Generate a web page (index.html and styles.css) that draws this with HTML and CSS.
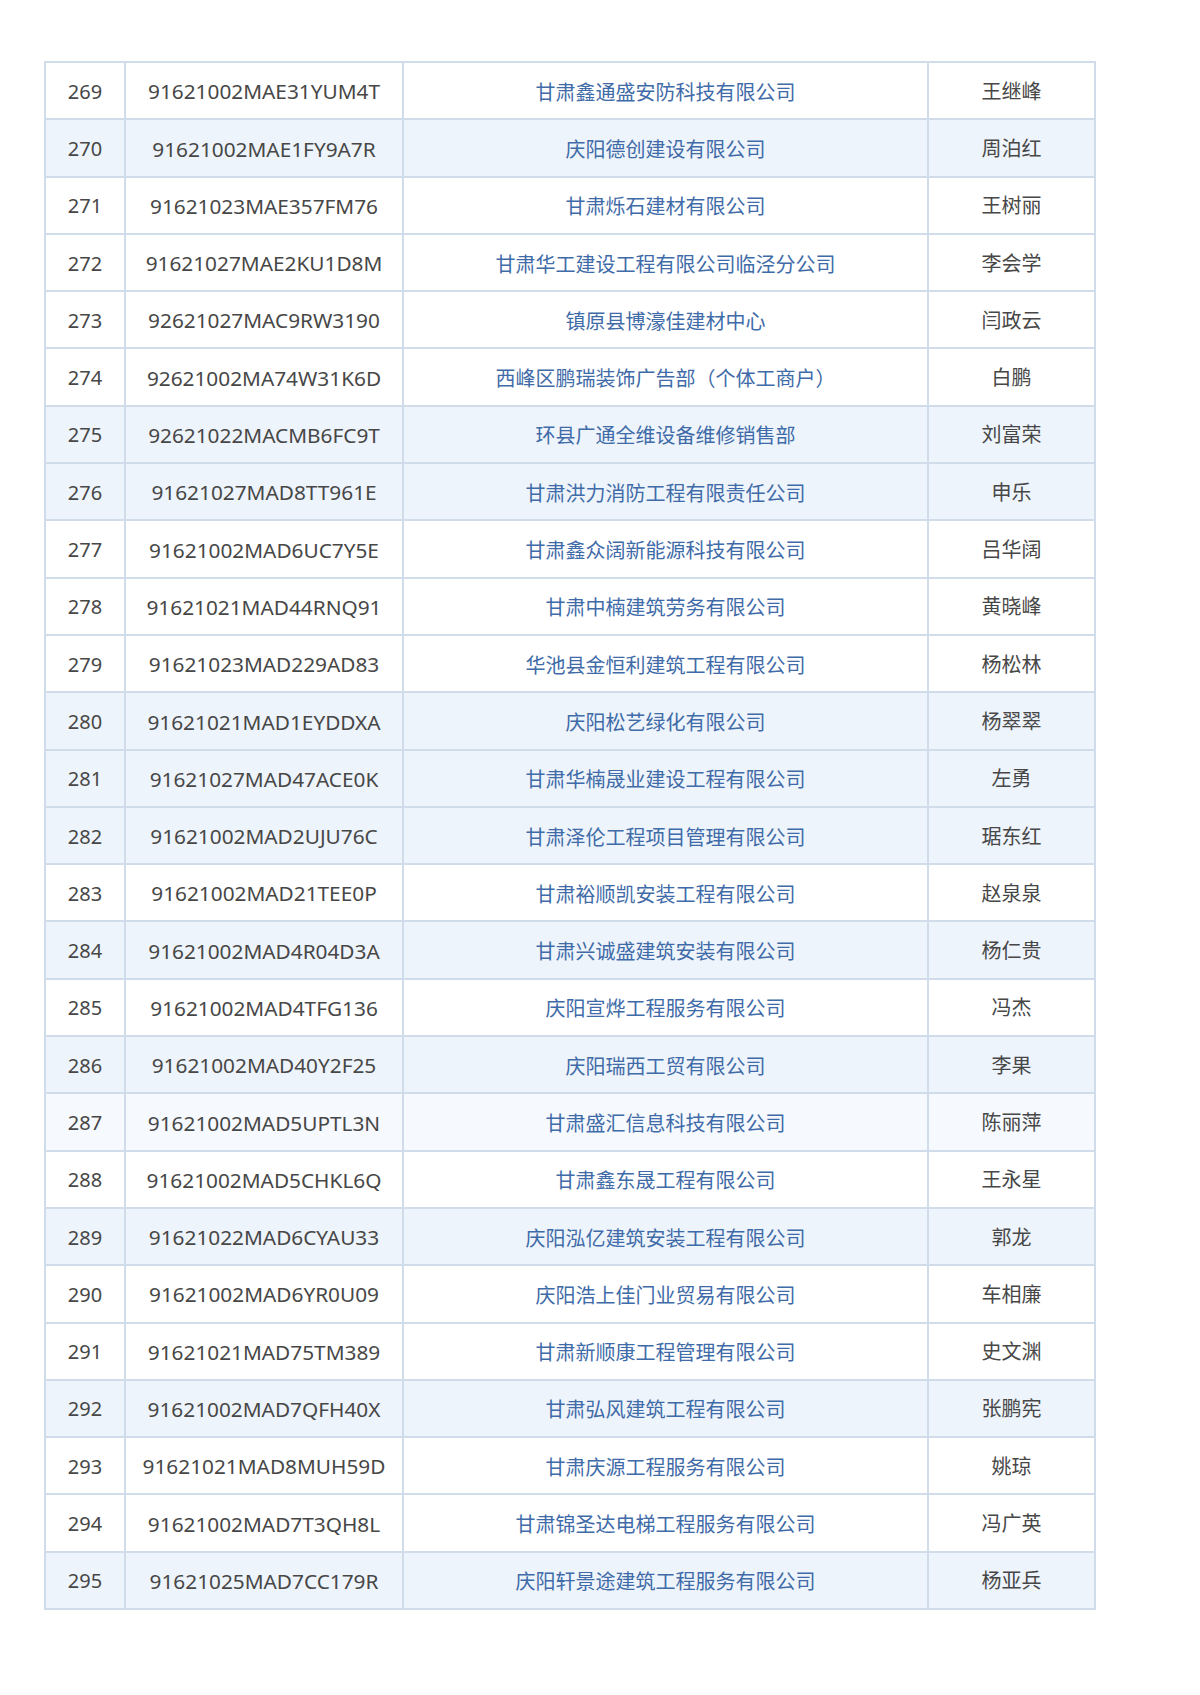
FILE: index.html
```html
<!DOCTYPE html>
<html lang="zh-CN">
<head>
<meta charset="utf-8">
<title>名单</title>
<link rel="stylesheet" href="styles.css">
</head>
<body>
<div class="page">
<table class="list">
<colgroup><col class="c-no"><col class="c-code"><col class="c-name"><col class="c-person"></colgroup>
<tbody>
<tr><td>269</td><td class="code">91621002MAE31YUM4T</td><td class="co">甘肃鑫通盛安防科技有限公司</td><td>王继峰</td></tr>
<tr class="tint"><td>270</td><td class="code">91621002MAE1FY9A7R</td><td class="co">庆阳德创建设有限公司</td><td>周泊红</td></tr>
<tr><td>271</td><td class="code">91621023MAE357FM76</td><td class="co">甘肃烁石建材有限公司</td><td>王树丽</td></tr>
<tr><td>272</td><td class="code">91621027MAE2KU1D8M</td><td class="co">甘肃华工建设工程有限公司临泾分公司</td><td>李会学</td></tr>
<tr><td>273</td><td class="code">92621027MAC9RW3190</td><td class="co">镇原县博濠佳建材中心</td><td>闫政云</td></tr>
<tr><td>274</td><td class="code">92621002MA74W31K6D</td><td class="co">西峰区鹏瑞装饰广告部（个体工商户）</td><td>白鹏</td></tr>
<tr class="tint"><td>275</td><td class="code">92621022MACMB6FC9T</td><td class="co">环县广通全维设备维修销售部</td><td>刘富荣</td></tr>
<tr class="tint"><td>276</td><td class="code">91621027MAD8TT961E</td><td class="co">甘肃洪力消防工程有限责任公司</td><td>申乐</td></tr>
<tr><td>277</td><td class="code">91621002MAD6UC7Y5E</td><td class="co">甘肃鑫众阔新能源科技有限公司</td><td>吕华阔</td></tr>
<tr><td>278</td><td class="code">91621021MAD44RNQ91</td><td class="co">甘肃中楠建筑劳务有限公司</td><td>黄晓峰</td></tr>
<tr><td>279</td><td class="code">91621023MAD229AD83</td><td class="co">华池县金恒利建筑工程有限公司</td><td>杨松林</td></tr>
<tr class="tint"><td>280</td><td class="code">91621021MAD1EYDDXA</td><td class="co">庆阳松艺绿化有限公司</td><td>杨翠翠</td></tr>
<tr class="tint"><td>281</td><td class="code">91621027MAD47ACE0K</td><td class="co">甘肃华楠晟业建设工程有限公司</td><td>左勇</td></tr>
<tr class="tint"><td>282</td><td class="code">91621002MAD2UJU76C</td><td class="co">甘肃泽伦工程项目管理有限公司</td><td>琚东红</td></tr>
<tr><td>283</td><td class="code">91621002MAD21TEE0P</td><td class="co">甘肃裕顺凯安装工程有限公司</td><td>赵泉泉</td></tr>
<tr class="tint"><td>284</td><td class="code">91621002MAD4R04D3A</td><td class="co">甘肃兴诚盛建筑安装有限公司</td><td>杨仁贵</td></tr>
<tr><td>285</td><td class="code">91621002MAD4TFG136</td><td class="co">庆阳宣烨工程服务有限公司</td><td>冯杰</td></tr>
<tr class="tint"><td>286</td><td class="code">91621002MAD40Y2F25</td><td class="co">庆阳瑞西工贸有限公司</td><td>李果</td></tr>
<tr class="faint"><td>287</td><td class="code">91621002MAD5UPTL3N</td><td class="co">甘肃盛汇信息科技有限公司</td><td>陈丽萍</td></tr>
<tr><td>288</td><td class="code">91621002MAD5CHKL6Q</td><td class="co">甘肃鑫东晟工程有限公司</td><td>王永星</td></tr>
<tr class="tint"><td>289</td><td class="code">91621022MAD6CYAU33</td><td class="co">庆阳泓亿建筑安装工程有限公司</td><td>郭龙</td></tr>
<tr><td>290</td><td class="code">91621002MAD6YR0U09</td><td class="co">庆阳浩上佳门业贸易有限公司</td><td>车相廉</td></tr>
<tr><td>291</td><td class="code">91621021MAD75TM389</td><td class="co">甘肃新顺康工程管理有限公司</td><td>史文渊</td></tr>
<tr class="tint"><td>292</td><td class="code">91621002MAD7QFH40X</td><td class="co">甘肃弘风建筑工程有限公司</td><td>张鹏宪</td></tr>
<tr><td>293</td><td class="code">91621021MAD8MUH59D</td><td class="co">甘肃庆源工程服务有限公司</td><td>姚琼</td></tr>
<tr><td>294</td><td class="code">91621002MAD7T3QH8L</td><td class="co">甘肃锦圣达电梯工程服务有限公司</td><td>冯广英</td></tr>
<tr class="tint"><td>295</td><td class="code">91621025MAD7CC179R</td><td class="co">庆阳轩景途建筑工程服务有限公司</td><td>杨亚兵</td></tr>
</tbody>
</table>
</div>
</body>
</html>
```

FILE: styles.css
```css
html, body {
  margin: 0;
  padding: 0;
  background: #ffffff;
}

.page {
  padding: 61px 0 0 44px;
}

.list {
  border-collapse: collapse;
  table-layout: fixed;
  width: 1050px;
  font-family: "Noto Sans", "Noto Sans CJK SC", sans-serif;
  font-size: 20px;
  color: #474747;
}

.c-no { width: 80px; }
.c-code { width: 278px; }
.c-name { width: 525px; }
.c-person { width: 167px; }

.list td {
  border: 2px solid #d0dcea;
  height: 57.3px;
  padding: 2px 0 0 0;
  box-sizing: border-box;
  text-align: center;
  vertical-align: middle;
  white-space: nowrap;
  line-height: 1;
}

.list td.code {
  font-size: 20.8px;
}

.list tr.tint td {
  background: #eef4fb;
}

.list tr.faint td {
  background: #f6f9fd;
}

.list td.co {
  color: #3f6ba8;
  font-family: "Noto Sans CJK SC", "Noto Sans", sans-serif;
}
```
